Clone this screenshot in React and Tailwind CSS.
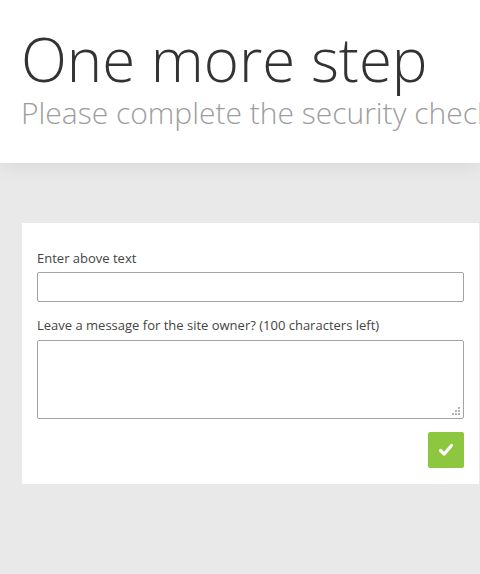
import React from "react";

function CheckIcon() {
  return (
    <svg width="16" height="14" viewBox="0 0 16 14" fill="none">
      <path
        d="M2.5 7.5 L6.2 11 L13.5 2.5"
        stroke="white"
        strokeWidth="3.2"
        strokeLinecap="round"
        strokeLinejoin="round"
      />
    </svg>
  );
}

function ResizeDots() {
  return (
    <svg width="10" height="10" viewBox="0 0 10 10" className="absolute right-[3px] bottom-[3px]">
      <rect x="7" y="1" width="2" height="2" fill="#b5b5b5" />
      <rect x="4" y="4" width="2" height="2" fill="#b5b5b5" />
      <rect x="7" y="4" width="2" height="2" fill="#b5b5b5" />
      <rect x="1" y="7" width="2" height="2" fill="#b5b5b5" />
      <rect x="4" y="7" width="2" height="2" fill="#b5b5b5" />
      <rect x="7" y="7" width="2" height="2" fill="#b5b5b5" />
    </svg>
  );
}

export default function App() {
  return (
    <div className="w-[480px] h-[574px] overflow-hidden bg-[#e9e9e9] font-['Open_Sans',sans-serif]">
      <header className="relative z-10 h-[163px] bg-white px-[21px] pt-[29px] shadow-[0_4px_18px_rgba(0,0,0,0.07)] whitespace-nowrap">
        <h1 className="text-[60px] leading-[60px] font-light text-[#333]">One more step</h1>
        <h2 className="mt-[9px] text-[30px] leading-[30px] font-light text-[#9d9d9d]">
          Please complete the security check to access
        </h2>
      </header>

      <div className="pt-[60px] pl-[22px]">
        <form className="w-[457px] bg-white px-[15px] pt-[26px] pb-[16px] flex flex-col">
          <label className="text-[13px] leading-[18px] text-[#444]">Enter above text</label>
          <input
            type="text"
            className="mt-[5px] h-[30px] w-full rounded-[2px] border border-[#a3a3a3] bg-white outline-none"
          />
          <label className="mt-[14px] text-[13px] leading-[18px] text-[#444]">
            Leave a message for the site owner? (100 characters left)
          </label>
          <div className="relative mt-[6px]">
            <textarea className="block h-[79px] w-full resize-none rounded-[2px] border border-[#a3a3a3] bg-white outline-none" />
            <ResizeDots />
          </div>
          <div className="mt-[13px] flex justify-end">
            <button
              type="button"
              className="flex h-[36px] w-[36px] items-center justify-center rounded-[2px] bg-[#8dc63f]"
            >
              <CheckIcon />
            </button>
          </div>
        </form>
      </div>
    </div>
  );
}
